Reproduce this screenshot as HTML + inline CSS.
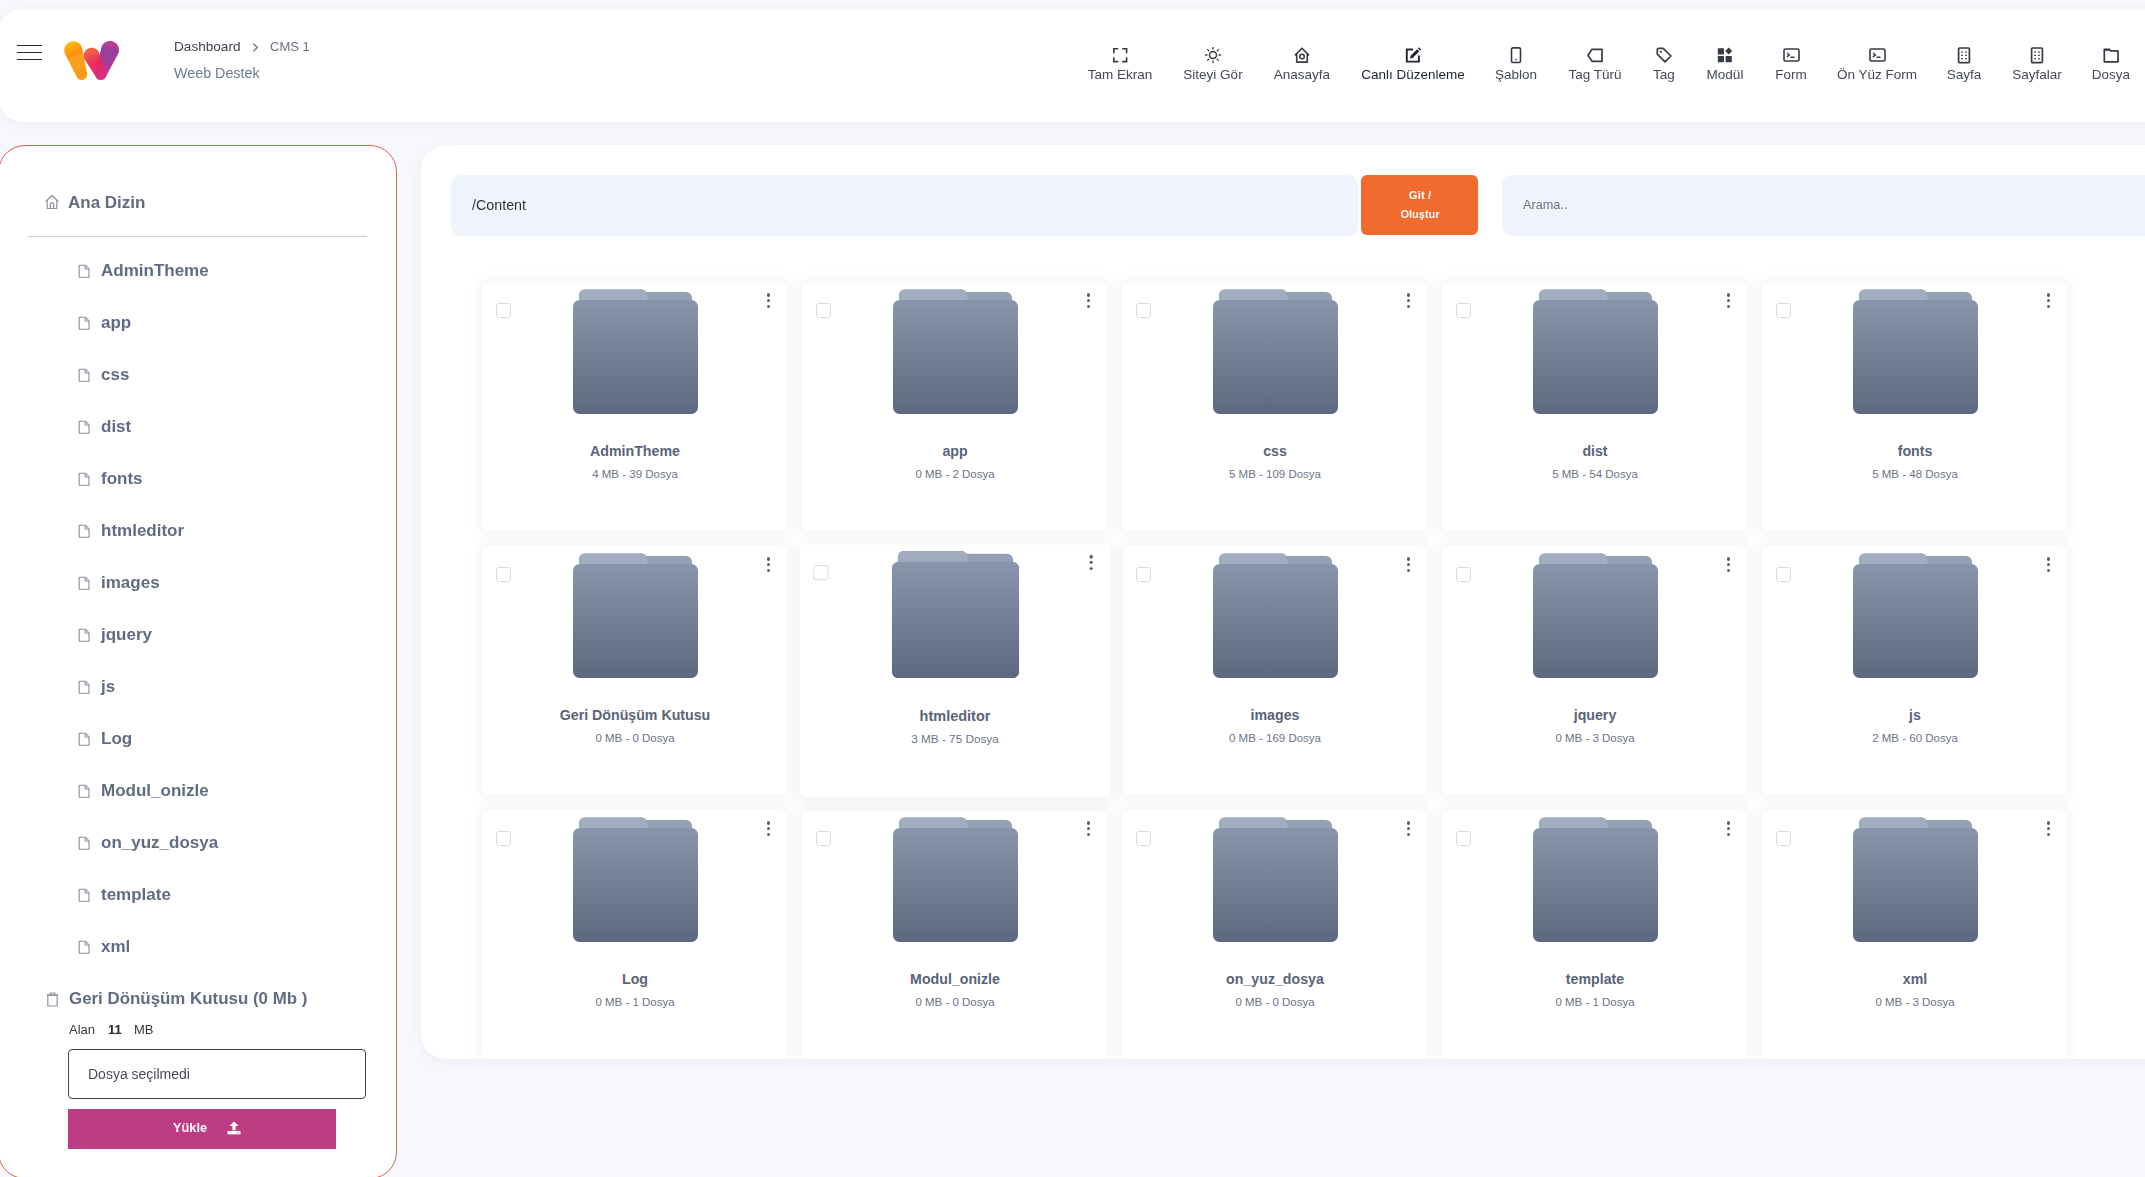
<!DOCTYPE html><html><head><meta charset="utf-8"><style>
*{box-sizing:border-box;margin:0;padding:0}
html,body{width:2145px;height:1177px;overflow:hidden;background:#f7f8fd;font-family:"Liberation Sans", sans-serif}
body{position:relative}
.t{position:absolute;white-space:nowrap;line-height:1;will-change:transform}
.c{width:300px;text-align:center}
.abs{position:absolute}
#hdr{position:absolute;left:-2px;top:9px;width:2300px;height:113px;background:#fff;border-radius:25px;box-shadow:0 2px 12px rgba(110,120,170,0.08)}
#side{position:absolute;left:-2px;top:145px;width:399px;height:1034px;background:#fff;border:1px solid #d6624a;border-radius:27px}
#main{position:absolute;left:421px;top:145px;width:1900px;height:914px;background:#fff;border-radius:25px;box-shadow:0 3px 14px rgba(110,120,170,0.08);overflow:hidden}
.inp{position:absolute;background:#eff3fc;border-radius:10px}
.card{position:absolute;width:304px;height:248px;background:#fff;border-radius:5px;box-shadow:0 0 14px 6px rgba(0,0,0,0.035)}
.card.hov{transform:scale(1.02);box-shadow:0 3px 12px 4px rgba(0,0,0,0.045);z-index:2}
.cb{position:absolute;left:13px;top:20px;width:15px;height:15px;border:1px solid #dcdcdc;border-radius:3px;background:#fff}
.dots{position:absolute;left:284px;top:10px;width:4px;height:16px}
.dots i{position:absolute;left:0;width:3.2px;height:3.2px;border-radius:50%;background:#5a5f6b}
.fold{position:absolute;left:90px;top:6px;width:125px;height:125px}
.nm{position:absolute;left:0;width:304px;text-align:center;white-space:nowrap;line-height:1}
</style></head><body>
<svg width="0" height="0" style="position:absolute"><defs>
<linearGradient id="fg" x1="0" y1="0" x2="0" y2="1"><stop offset="0" stop-color="#8995ac"/><stop offset="1" stop-color="#5d6981"/></linearGradient>
<symbol id="fold" viewBox="0 0 125 125">
<path d="M6 17V8.1A5 5 0 0 1 11 3.1H113A6 6 0 0 1 119 9.1V17Z" fill="#929fb5"/>
<path d="M6 17V5.8A5.6 5.6 0 0 1 11.6 0.2H69A3 3 0 0 1 71.2 1.1L74.3 3.6V17Z" fill="#a1adbf"/>
<rect x="0" y="11" width="125" height="114" rx="6.5" fill="url(#fg)"/>
</symbol></defs></svg>
<div id="hdr"></div><div class="abs" style="left:17px;top:44.75px;width:25px;height:1.5px;background:#2b2b2b"></div><div class="abs" style="left:17px;top:51.65px;width:25px;height:1.5px;background:#2b2b2b"></div><div class="abs" style="left:17px;top:58.65px;width:25px;height:1.5px;background:#2b2b2b"></div><svg class="abs" style="left:56px;top:34px" width="72" height="54" viewBox="56 34 72 54">
<defs>
<linearGradient id="lgA" gradientUnits="userSpaceOnUse" x1="66" y1="42" x2="84" y2="80"><stop offset="0" stop-color="#ffc107"/><stop offset="0.35" stop-color="#fb8f0a"/><stop offset="0.45" stop-color="#f9a11b"/><stop offset="1" stop-color="#f7991d"/></linearGradient>
<linearGradient id="lgB" gradientUnits="userSpaceOnUse" x1="86" y1="48" x2="102" y2="80"><stop offset="0" stop-color="#f4683a"/><stop offset="0.5" stop-color="#e8235a"/><stop offset="1" stop-color="#d9307c"/></linearGradient>
<linearGradient id="lgC" gradientUnits="userSpaceOnUse" x1="112" y1="42" x2="100" y2="80"><stop offset="0" stop-color="#c13b8f"/><stop offset="0.2" stop-color="#9a3f9e"/><stop offset="0.5" stop-color="#a23d9a"/><stop offset="1" stop-color="#d5368a"/></linearGradient>
</defs>
<path d="M64.30 50.20 L64.38 49.03 L64.61 47.87 L64.99 46.76 L65.51 45.70 L66.16 44.72 L66.94 43.84 L67.82 43.06 L68.80 42.41 L69.86 41.89 L70.97 41.51 L72.13 41.28 L73.30 41.20 L74.47 41.28 L75.63 41.51 L76.74 41.89 L77.80 42.41 L78.78 43.06 L79.66 43.84 L80.44 44.72 L81.09 45.70 L81.61 46.76 L81.99 47.87 L87.01 72.85 L87.15 73.57 L87.20 74.30 L87.15 75.03 L87.01 75.75 L86.77 76.44 L86.45 77.10 L86.04 77.71 L85.56 78.26 L85.01 78.74 L84.40 79.15 L83.74 79.47 L83.05 79.71 L82.33 79.85 L81.60 79.90 L80.87 79.85 L80.15 79.71 L79.46 79.47 L78.80 79.15 L78.19 78.74 L77.64 78.26 L77.16 77.71 L76.75 77.10 L65.51 54.70 L64.99 53.64 L64.61 52.53 L64.38 51.37Z" fill="url(#lgA)"/>
<path d="M95.20 74.30 L95.25 73.57 L95.39 72.85 L101.31 47.67 L101.69 46.56 L102.21 45.50 L102.86 44.52 L103.64 43.64 L104.52 42.86 L105.50 42.21 L106.56 41.69 L107.67 41.31 L108.83 41.08 L110.00 41.00 L111.17 41.08 L112.33 41.31 L113.44 41.69 L114.50 42.21 L115.48 42.86 L116.36 43.64 L117.14 44.52 L117.79 45.50 L118.31 46.56 L118.69 47.67 L118.92 48.83 L119.00 50.00 L118.92 51.17 L118.69 52.33 L118.31 53.44 L117.79 54.50 L105.65 77.10 L105.24 77.71 L104.76 78.26 L104.21 78.74 L103.60 79.15 L102.94 79.47 L102.25 79.71 L101.53 79.85 L100.80 79.90 L100.07 79.85 L99.35 79.71 L98.66 79.47 L98.00 79.15 L97.39 78.74 L96.84 78.26 L96.36 77.71 L95.95 77.10 L95.63 76.44 L95.39 75.75 L95.25 75.03Z" fill="url(#lgC)"/>
<path d="M83.70 55.60 L83.77 54.57 L83.97 53.56 L84.30 52.58 L84.76 51.65 L85.33 50.79 L86.01 50.01 L86.79 49.33 L87.65 48.76 L88.58 48.30 L89.56 47.97 L90.57 47.77 L91.60 47.70 L92.63 47.77 L93.64 47.97 L94.62 48.30 L95.55 48.76 L96.41 49.33 L97.19 50.01 L97.87 50.79 L98.44 51.65 L98.90 52.58 L105.97 72.16 L106.21 72.85 L106.35 73.57 L106.40 74.30 L106.35 75.03 L106.21 75.75 L105.97 76.44 L105.65 77.10 L105.24 77.71 L104.76 78.26 L104.21 78.74 L103.60 79.15 L102.94 79.47 L102.25 79.71 L101.53 79.85 L100.80 79.90 L100.07 79.85 L99.35 79.71 L98.66 79.47 L98.00 79.15 L97.39 78.74 L96.84 78.26 L96.36 77.71 L95.95 77.10 L84.76 59.55 L84.30 58.62 L83.97 57.64 L83.77 56.63Z" fill="url(#lgB)" opacity="0.96"/>
</svg><div class="t" style="left:173.7px;top:39.79px;font-size:13.6px;font-weight:normal;color:#3d4350;">Dashboard</div><svg class="abs" style="left:251px;top:42px" width="9" height="11" viewBox="0 0 9 11"><polyline points="2.5,1.8 6.3,5.5 2.5,9.2" fill="none" stroke="#6b7a99" stroke-width="1.4"/></svg><div class="t" style="left:270.0px;top:40.30px;font-size:13.0px;font-weight:normal;color:#6b7280;">CMS 1</div><div class="t" style="left:173.7px;top:66.00px;font-size:14.3px;font-weight:normal;color:#6b7a90;">Weeb Destek</div><svg class="abs" style="left:1112.2px;top:47px" width="17" height="17" viewBox="0 0 17 17"><path d="M1.8 6.2V1.8H6.2M10.2 1.8H14.6V6.2M14.6 10.2V14.6H10.2M6.2 14.6H1.8V10.2" fill="none" stroke="#363b47" stroke-width="1.6"/></svg><div class="t c" style="left:970.2px;top:67.77px;font-size:13.5px;font-weight:normal;color:#434955;">Tam Ekran</div><svg class="abs" style="left:1204.6px;top:47px" width="17" height="17" viewBox="0 0 17 17"><circle cx="8" cy="8" r="3.5" fill="none" stroke="#363b47" stroke-width="1.5"/><line x1="14.00" y1="8.00" x2="15.60" y2="8.00" stroke="#363b47" stroke-width="1.3" stroke-linecap="round"/><line x1="12.24" y1="12.24" x2="13.37" y2="13.37" stroke="#363b47" stroke-width="1.3" stroke-linecap="round"/><line x1="8.00" y1="14.00" x2="8.00" y2="15.60" stroke="#363b47" stroke-width="1.3" stroke-linecap="round"/><line x1="3.76" y1="12.24" x2="2.63" y2="13.37" stroke="#363b47" stroke-width="1.3" stroke-linecap="round"/><line x1="2.00" y1="8.00" x2="0.40" y2="8.00" stroke="#363b47" stroke-width="1.3" stroke-linecap="round"/><line x1="3.76" y1="3.76" x2="2.63" y2="2.63" stroke="#363b47" stroke-width="1.3" stroke-linecap="round"/><line x1="8.00" y1="2.00" x2="8.00" y2="0.40" stroke="#363b47" stroke-width="1.3" stroke-linecap="round"/><line x1="12.24" y1="3.76" x2="13.37" y2="2.63" stroke="#363b47" stroke-width="1.3" stroke-linecap="round"/></svg><div class="t c" style="left:1062.6px;top:67.77px;font-size:13.5px;font-weight:normal;color:#434955;">Siteyi Gör</div><svg class="abs" style="left:1293.8px;top:47px" width="17" height="17" viewBox="0 0 17 17"><path d="M0.9 8.4L8 1.2L15.1 8.4M2.7 6.8V15.1H13.3V6.8" fill="none" stroke="#363b47" stroke-width="1.6" stroke-linejoin="round"/><circle cx="8" cy="9.5" r="2.3" fill="none" stroke="#363b47" stroke-width="1.5"/></svg><div class="t c" style="left:1151.8px;top:67.77px;font-size:13.5px;font-weight:normal;color:#434955;">Anasayfa</div><svg class="abs" style="left:1404.8px;top:47px" width="17" height="17" viewBox="0 0 17 17"><path d="M8 2.5H1.8V14.6H13.9V8.4" fill="none" stroke="#1f2430" stroke-width="1.9"/><path d="M5 11.5L5.6 8.8L12.2 2.2L14.3 4.3L7.7 10.9Z" fill="#1f2430"/><path d="M13 1.4L14.1 0.3L16.2 2.4L15.1 3.5Z" fill="#1f2430"/></svg><div class="t c" style="left:1262.8px;top:67.77px;font-size:13.5px;font-weight:normal;color:#1d2430;">Canlı Düzenleme</div><svg class="abs" style="left:1508.3px;top:47px" width="17" height="17" viewBox="0 0 17 17"><rect x="3.5" y="0.9" width="9" height="14.6" rx="1.4" fill="none" stroke="#363b47" stroke-width="1.6"/><circle cx="8" cy="12.6" r="0.8" fill="#363b47"/></svg><div class="t c" style="left:1366.3px;top:67.77px;font-size:13.5px;font-weight:normal;color:#434955;">Şablon</div><svg class="abs" style="left:1586.8px;top:47px" width="17" height="17" viewBox="0 0 17 17"><path d="M5 2.3H15V14.3H5L1 8.3Z" fill="none" stroke="#363b47" stroke-width="1.7" stroke-linejoin="round"/></svg><div class="t c" style="left:1444.8px;top:67.77px;font-size:13.5px;font-weight:normal;color:#434955;">Tag Türü</div><svg class="abs" style="left:1655.6px;top:47px" width="17" height="17" viewBox="0 0 17 17"><path d="M1.3 2.2V7.2L9 14.9L14.9 9L7.2 1.3H2.2Z" fill="none" stroke="#363b47" stroke-width="1.7" stroke-linejoin="round" transform="rotate(0)"/><circle cx="4.8" cy="4.8" r="1.1" fill="#363b47"/></svg><div class="t c" style="left:1513.6px;top:67.77px;font-size:13.5px;font-weight:normal;color:#434955;">Tag</div><svg class="abs" style="left:1716.7px;top:47px" width="17" height="17" viewBox="0 0 17 17"><rect x="0.8" y="1.3" width="6.2" height="6.2" rx="0.6" fill="#363b47"/><rect x="0.8" y="9" width="6.2" height="6.2" rx="0.6" fill="#363b47"/><rect x="8.6" y="9" width="6.2" height="6.2" rx="0.6" fill="#363b47"/><path d="M11.7 0.6L15.2 4.1L11.7 7.6L8.2 4.1Z" fill="#363b47"/></svg><div class="t c" style="left:1574.7px;top:67.77px;font-size:13.5px;font-weight:normal;color:#434955;">Modül</div><svg class="abs" style="left:1782.6px;top:47px" width="17" height="17" viewBox="0 0 17 17"><rect x="1" y="2" width="15" height="12" rx="1.4" fill="none" stroke="#363b47" stroke-width="1.6"/><path d="M4 6L6.3 7.9L4 9.8" fill="none" stroke="#363b47" stroke-width="1.5"/><line x1="7.5" y1="10.3" x2="11.5" y2="10.3" stroke="#363b47" stroke-width="1.5"/></svg><div class="t c" style="left:1640.6px;top:67.77px;font-size:13.5px;font-weight:normal;color:#434955;">Form</div><svg class="abs" style="left:1868.6px;top:47px" width="17" height="17" viewBox="0 0 17 17"><rect x="1" y="2" width="15" height="12" rx="1.4" fill="none" stroke="#363b47" stroke-width="1.6"/><path d="M4 6L6.3 7.9L4 9.8" fill="none" stroke="#363b47" stroke-width="1.5"/><line x1="7.5" y1="10.3" x2="11.5" y2="10.3" stroke="#363b47" stroke-width="1.5"/></svg><div class="t c" style="left:1726.6px;top:67.77px;font-size:13.5px;font-weight:normal;color:#434955;">Ön Yüz Form</div><svg class="abs" style="left:1955.8px;top:47px" width="17" height="17" viewBox="0 0 17 17"><rect x="2.6" y="1" width="10.8" height="14.6" rx="1" fill="none" stroke="#363b47" stroke-width="1.7"/><g fill="#363b47"><rect x="5.2" y="4.4" width="1.7" height="1.3"/><rect x="9.1" y="4.4" width="1.7" height="1.3"/><rect x="5.2" y="7.7" width="1.7" height="1.3"/><rect x="9.1" y="7.7" width="1.7" height="1.3"/><rect x="5.2" y="11" width="1.7" height="1.3"/><rect x="9.1" y="11" width="1.7" height="1.3"/></g></svg><div class="t c" style="left:1813.8px;top:67.77px;font-size:13.5px;font-weight:normal;color:#434955;">Sayfa</div><svg class="abs" style="left:2028.6px;top:47px" width="17" height="17" viewBox="0 0 17 17"><rect x="2.6" y="1" width="10.8" height="14.6" rx="1" fill="none" stroke="#363b47" stroke-width="1.7"/><g fill="#363b47"><rect x="5.2" y="4.4" width="1.7" height="1.3"/><rect x="9.1" y="4.4" width="1.7" height="1.3"/><rect x="5.2" y="7.7" width="1.7" height="1.3"/><rect x="9.1" y="7.7" width="1.7" height="1.3"/><rect x="5.2" y="11" width="1.7" height="1.3"/><rect x="9.1" y="11" width="1.7" height="1.3"/></g></svg><div class="t c" style="left:1886.6px;top:67.77px;font-size:13.5px;font-weight:normal;color:#434955;">Sayfalar</div><svg class="abs" style="left:2103.3px;top:47px" width="17" height="17" viewBox="0 0 17 17"><path d="M1.3 2.4H6.3L7.8 3.9H15V14.8H1.3Z" fill="none" stroke="#363b47" stroke-width="1.7" stroke-linejoin="round"/><rect x="1.3" y="2.2" width="5" height="1.6" fill="#363b47"/></svg><div class="t c" style="left:1961.3px;top:67.77px;font-size:13.5px;font-weight:normal;color:#434955;">Dosya</div><div id="side"></div><svg class="abs" style="left:44px;top:194px" width="16" height="16" viewBox="0 0 16 16"><path d="M1.8 7.2L8 1.5L14.2 7.2M3.2 6V14.5H12.8V6" fill="none" stroke="#8b93a3" stroke-width="1.2" stroke-linejoin="round"/><path d="M6.4 14.5V10.2A1.6 1.6 0 0 1 9.6 10.2V14.5" fill="none" stroke="#8b93a3" stroke-width="1.2"/></svg><div class="t" style="left:68.3px;top:193.51px;font-size:17px;font-weight:bold;color:#616c83;">Ana Dizin</div><div class="abs" style="left:28px;top:236px;width:339px;height:1px;background:#c6c9cf"></div><svg class="abs" style="left:77.5px;top:263.6px" width="12.5" height="14.5" viewBox="0 0 12.5 14.5"><path d="M1.2 1.2H7.4L11 4.8V13.2H1.2Z" fill="none" stroke="#8b93a3" stroke-width="1.15" stroke-linejoin="round"/><path d="M7.2 1.2V5H11" fill="none" stroke="#8b93a3" stroke-width="1.1"/></svg><div class="t" style="left:100.6px;top:262.31px;font-size:17px;font-weight:bold;color:#616c83;">AdminTheme</div><svg class="abs" style="left:77.5px;top:315.6px" width="12.5" height="14.5" viewBox="0 0 12.5 14.5"><path d="M1.2 1.2H7.4L11 4.8V13.2H1.2Z" fill="none" stroke="#8b93a3" stroke-width="1.15" stroke-linejoin="round"/><path d="M7.2 1.2V5H11" fill="none" stroke="#8b93a3" stroke-width="1.1"/></svg><div class="t" style="left:100.6px;top:314.31px;font-size:17px;font-weight:bold;color:#616c83;">app</div><svg class="abs" style="left:77.5px;top:367.6px" width="12.5" height="14.5" viewBox="0 0 12.5 14.5"><path d="M1.2 1.2H7.4L11 4.8V13.2H1.2Z" fill="none" stroke="#8b93a3" stroke-width="1.15" stroke-linejoin="round"/><path d="M7.2 1.2V5H11" fill="none" stroke="#8b93a3" stroke-width="1.1"/></svg><div class="t" style="left:100.6px;top:366.31px;font-size:17px;font-weight:bold;color:#616c83;">css</div><svg class="abs" style="left:77.5px;top:419.6px" width="12.5" height="14.5" viewBox="0 0 12.5 14.5"><path d="M1.2 1.2H7.4L11 4.8V13.2H1.2Z" fill="none" stroke="#8b93a3" stroke-width="1.15" stroke-linejoin="round"/><path d="M7.2 1.2V5H11" fill="none" stroke="#8b93a3" stroke-width="1.1"/></svg><div class="t" style="left:100.6px;top:418.31px;font-size:17px;font-weight:bold;color:#616c83;">dist</div><svg class="abs" style="left:77.5px;top:471.6px" width="12.5" height="14.5" viewBox="0 0 12.5 14.5"><path d="M1.2 1.2H7.4L11 4.8V13.2H1.2Z" fill="none" stroke="#8b93a3" stroke-width="1.15" stroke-linejoin="round"/><path d="M7.2 1.2V5H11" fill="none" stroke="#8b93a3" stroke-width="1.1"/></svg><div class="t" style="left:100.6px;top:470.31px;font-size:17px;font-weight:bold;color:#616c83;">fonts</div><svg class="abs" style="left:77.5px;top:523.6px" width="12.5" height="14.5" viewBox="0 0 12.5 14.5"><path d="M1.2 1.2H7.4L11 4.8V13.2H1.2Z" fill="none" stroke="#8b93a3" stroke-width="1.15" stroke-linejoin="round"/><path d="M7.2 1.2V5H11" fill="none" stroke="#8b93a3" stroke-width="1.1"/></svg><div class="t" style="left:100.6px;top:522.31px;font-size:17px;font-weight:bold;color:#616c83;">htmleditor</div><svg class="abs" style="left:77.5px;top:575.6px" width="12.5" height="14.5" viewBox="0 0 12.5 14.5"><path d="M1.2 1.2H7.4L11 4.8V13.2H1.2Z" fill="none" stroke="#8b93a3" stroke-width="1.15" stroke-linejoin="round"/><path d="M7.2 1.2V5H11" fill="none" stroke="#8b93a3" stroke-width="1.1"/></svg><div class="t" style="left:100.6px;top:574.31px;font-size:17px;font-weight:bold;color:#616c83;">images</div><svg class="abs" style="left:77.5px;top:627.6px" width="12.5" height="14.5" viewBox="0 0 12.5 14.5"><path d="M1.2 1.2H7.4L11 4.8V13.2H1.2Z" fill="none" stroke="#8b93a3" stroke-width="1.15" stroke-linejoin="round"/><path d="M7.2 1.2V5H11" fill="none" stroke="#8b93a3" stroke-width="1.1"/></svg><div class="t" style="left:100.6px;top:626.31px;font-size:17px;font-weight:bold;color:#616c83;">jquery</div><svg class="abs" style="left:77.5px;top:679.6px" width="12.5" height="14.5" viewBox="0 0 12.5 14.5"><path d="M1.2 1.2H7.4L11 4.8V13.2H1.2Z" fill="none" stroke="#8b93a3" stroke-width="1.15" stroke-linejoin="round"/><path d="M7.2 1.2V5H11" fill="none" stroke="#8b93a3" stroke-width="1.1"/></svg><div class="t" style="left:100.6px;top:678.31px;font-size:17px;font-weight:bold;color:#616c83;">js</div><svg class="abs" style="left:77.5px;top:731.6px" width="12.5" height="14.5" viewBox="0 0 12.5 14.5"><path d="M1.2 1.2H7.4L11 4.8V13.2H1.2Z" fill="none" stroke="#8b93a3" stroke-width="1.15" stroke-linejoin="round"/><path d="M7.2 1.2V5H11" fill="none" stroke="#8b93a3" stroke-width="1.1"/></svg><div class="t" style="left:100.6px;top:730.31px;font-size:17px;font-weight:bold;color:#616c83;">Log</div><svg class="abs" style="left:77.5px;top:783.6px" width="12.5" height="14.5" viewBox="0 0 12.5 14.5"><path d="M1.2 1.2H7.4L11 4.8V13.2H1.2Z" fill="none" stroke="#8b93a3" stroke-width="1.15" stroke-linejoin="round"/><path d="M7.2 1.2V5H11" fill="none" stroke="#8b93a3" stroke-width="1.1"/></svg><div class="t" style="left:100.6px;top:782.31px;font-size:17px;font-weight:bold;color:#616c83;">Modul_onizle</div><svg class="abs" style="left:77.5px;top:835.6px" width="12.5" height="14.5" viewBox="0 0 12.5 14.5"><path d="M1.2 1.2H7.4L11 4.8V13.2H1.2Z" fill="none" stroke="#8b93a3" stroke-width="1.15" stroke-linejoin="round"/><path d="M7.2 1.2V5H11" fill="none" stroke="#8b93a3" stroke-width="1.1"/></svg><div class="t" style="left:100.6px;top:834.31px;font-size:17px;font-weight:bold;color:#616c83;">on_yuz_dosya</div><svg class="abs" style="left:77.5px;top:887.6px" width="12.5" height="14.5" viewBox="0 0 12.5 14.5"><path d="M1.2 1.2H7.4L11 4.8V13.2H1.2Z" fill="none" stroke="#8b93a3" stroke-width="1.15" stroke-linejoin="round"/><path d="M7.2 1.2V5H11" fill="none" stroke="#8b93a3" stroke-width="1.1"/></svg><div class="t" style="left:100.6px;top:886.31px;font-size:17px;font-weight:bold;color:#616c83;">template</div><svg class="abs" style="left:77.5px;top:939.6px" width="12.5" height="14.5" viewBox="0 0 12.5 14.5"><path d="M1.2 1.2H7.4L11 4.8V13.2H1.2Z" fill="none" stroke="#8b93a3" stroke-width="1.15" stroke-linejoin="round"/><path d="M7.2 1.2V5H11" fill="none" stroke="#8b93a3" stroke-width="1.1"/></svg><div class="t" style="left:100.6px;top:938.31px;font-size:17px;font-weight:bold;color:#616c83;">xml</div><svg class="abs" style="left:45.5px;top:991.5px" width="13" height="15" viewBox="0 0 13 15"><path d="M1.8 3.2H11.2V14H1.8Z" fill="none" stroke="#8b93a3" stroke-width="1.2"/><path d="M0.8 3.2H12.2M4.2 3.2V1H8.8V3.2" fill="none" stroke="#8b93a3" stroke-width="1.2"/></svg><div class="t" style="left:68.5px;top:990.89px;font-size:16.9px;font-weight:bold;color:#616c83;">Geri Dönüşüm Kutusu (0 Mb )</div><div class="t" style="left:68.5px;top:1022.80px;font-size:13px;font-weight:normal;color:#3a3a3a;">Alan</div><div class="t" style="left:107.6px;top:1022.80px;font-size:13px;font-weight:bold;color:#2a2a2a;">11</div><div class="t" style="left:133.5px;top:1022.80px;font-size:13px;font-weight:normal;color:#3a3a3a;">MB</div><div class="abs" style="left:68px;top:1049px;width:298px;height:50px;border:1.3px solid #3e4257;border-radius:4px;background:#fff"></div><div class="t" style="left:87.6px;top:1067.25px;font-size:14px;font-weight:normal;color:#474c57;">Dosya seçilmedi</div><div class="abs" style="left:68px;top:1109px;width:268px;height:40px;background:#bd3d85"></div><div class="t" style="left:173.4px;top:1121.96px;font-size:12.8px;font-weight:bold;color:#fff;">Yükle</div><svg class="abs" style="left:226.5px;top:1121px" width="14" height="14" viewBox="0 0 14 14"><path d="M7 0.5L11.5 5H8.6V9.2H5.4V5H2.5Z" fill="#fff"/><rect x="0.5" y="10" width="13" height="3.4" fill="#fff"/><rect x="9.5" y="11.4" width="1" height="0.9" fill="#bd3d85"/><rect x="11.3" y="11.4" width="1" height="0.9" fill="#bd3d85"/></svg><div id="main"><div class="card" style="left:62px;top:138px"><div class="cb"></div><div class="dots"><i style="top:0.4px"></i><i style="top:6.3px"></i><i style="top:12.1px"></i></div><svg class="fold"><use href="#fold"/></svg><div class="nm" style="top:160.78px;font-size:14.2px;font-weight:bold;color:#5a6479">AdminTheme</div><div class="nm" style="top:186.07px;font-size:11.5px;color:#6c7588">4 MB - 39 Dosya</div></div><div class="card" style="left:382px;top:138px"><div class="cb"></div><div class="dots"><i style="top:0.4px"></i><i style="top:6.3px"></i><i style="top:12.1px"></i></div><svg class="fold"><use href="#fold"/></svg><div class="nm" style="top:160.78px;font-size:14.2px;font-weight:bold;color:#5a6479">app</div><div class="nm" style="top:186.07px;font-size:11.5px;color:#6c7588">0 MB - 2 Dosya</div></div><div class="card" style="left:702px;top:138px"><div class="cb"></div><div class="dots"><i style="top:0.4px"></i><i style="top:6.3px"></i><i style="top:12.1px"></i></div><svg class="fold"><use href="#fold"/></svg><div class="nm" style="top:160.78px;font-size:14.2px;font-weight:bold;color:#5a6479">css</div><div class="nm" style="top:186.07px;font-size:11.5px;color:#6c7588">5 MB - 109 Dosya</div></div><div class="card" style="left:1022px;top:138px"><div class="cb"></div><div class="dots"><i style="top:0.4px"></i><i style="top:6.3px"></i><i style="top:12.1px"></i></div><svg class="fold"><use href="#fold"/></svg><div class="nm" style="top:160.78px;font-size:14.2px;font-weight:bold;color:#5a6479">dist</div><div class="nm" style="top:186.07px;font-size:11.5px;color:#6c7588">5 MB - 54 Dosya</div></div><div class="card" style="left:1342px;top:138px"><div class="cb"></div><div class="dots"><i style="top:0.4px"></i><i style="top:6.3px"></i><i style="top:12.1px"></i></div><svg class="fold"><use href="#fold"/></svg><div class="nm" style="top:160.78px;font-size:14.2px;font-weight:bold;color:#5a6479">fonts</div><div class="nm" style="top:186.07px;font-size:11.5px;color:#6c7588">5 MB - 48 Dosya</div></div><div class="card" style="left:62px;top:402px"><div class="cb"></div><div class="dots"><i style="top:0.4px"></i><i style="top:6.3px"></i><i style="top:12.1px"></i></div><svg class="fold"><use href="#fold"/></svg><div class="nm" style="top:160.78px;font-size:14.2px;font-weight:bold;color:#5a6479">Geri Dönüşüm Kutusu</div><div class="nm" style="top:186.07px;font-size:11.5px;color:#6c7588">0 MB - 0 Dosya</div></div><div class="card hov" style="left:382px;top:402px"><div class="cb"></div><div class="dots"><i style="top:0.4px"></i><i style="top:6.3px"></i><i style="top:12.1px"></i></div><svg class="fold"><use href="#fold"/></svg><div class="nm" style="top:160.78px;font-size:14.2px;font-weight:bold;color:#5a6479">htmleditor</div><div class="nm" style="top:186.07px;font-size:11.5px;color:#6c7588">3 MB - 75 Dosya</div></div><div class="card" style="left:702px;top:402px"><div class="cb"></div><div class="dots"><i style="top:0.4px"></i><i style="top:6.3px"></i><i style="top:12.1px"></i></div><svg class="fold"><use href="#fold"/></svg><div class="nm" style="top:160.78px;font-size:14.2px;font-weight:bold;color:#5a6479">images</div><div class="nm" style="top:186.07px;font-size:11.5px;color:#6c7588">0 MB - 169 Dosya</div></div><div class="card" style="left:1022px;top:402px"><div class="cb"></div><div class="dots"><i style="top:0.4px"></i><i style="top:6.3px"></i><i style="top:12.1px"></i></div><svg class="fold"><use href="#fold"/></svg><div class="nm" style="top:160.78px;font-size:14.2px;font-weight:bold;color:#5a6479">jquery</div><div class="nm" style="top:186.07px;font-size:11.5px;color:#6c7588">0 MB - 3 Dosya</div></div><div class="card" style="left:1342px;top:402px"><div class="cb"></div><div class="dots"><i style="top:0.4px"></i><i style="top:6.3px"></i><i style="top:12.1px"></i></div><svg class="fold"><use href="#fold"/></svg><div class="nm" style="top:160.78px;font-size:14.2px;font-weight:bold;color:#5a6479">js</div><div class="nm" style="top:186.07px;font-size:11.5px;color:#6c7588">2 MB - 60 Dosya</div></div><div class="card" style="left:62px;top:666px"><div class="cb"></div><div class="dots"><i style="top:0.4px"></i><i style="top:6.3px"></i><i style="top:12.1px"></i></div><svg class="fold"><use href="#fold"/></svg><div class="nm" style="top:160.78px;font-size:14.2px;font-weight:bold;color:#5a6479">Log</div><div class="nm" style="top:186.07px;font-size:11.5px;color:#6c7588">0 MB - 1 Dosya</div></div><div class="card" style="left:382px;top:666px"><div class="cb"></div><div class="dots"><i style="top:0.4px"></i><i style="top:6.3px"></i><i style="top:12.1px"></i></div><svg class="fold"><use href="#fold"/></svg><div class="nm" style="top:160.78px;font-size:14.2px;font-weight:bold;color:#5a6479">Modul_onizle</div><div class="nm" style="top:186.07px;font-size:11.5px;color:#6c7588">0 MB - 0 Dosya</div></div><div class="card" style="left:702px;top:666px"><div class="cb"></div><div class="dots"><i style="top:0.4px"></i><i style="top:6.3px"></i><i style="top:12.1px"></i></div><svg class="fold"><use href="#fold"/></svg><div class="nm" style="top:160.78px;font-size:14.2px;font-weight:bold;color:#5a6479">on_yuz_dosya</div><div class="nm" style="top:186.07px;font-size:11.5px;color:#6c7588">0 MB - 0 Dosya</div></div><div class="card" style="left:1022px;top:666px"><div class="cb"></div><div class="dots"><i style="top:0.4px"></i><i style="top:6.3px"></i><i style="top:12.1px"></i></div><svg class="fold"><use href="#fold"/></svg><div class="nm" style="top:160.78px;font-size:14.2px;font-weight:bold;color:#5a6479">template</div><div class="nm" style="top:186.07px;font-size:11.5px;color:#6c7588">0 MB - 1 Dosya</div></div><div class="card" style="left:1342px;top:666px"><div class="cb"></div><div class="dots"><i style="top:0.4px"></i><i style="top:6.3px"></i><i style="top:12.1px"></i></div><svg class="fold"><use href="#fold"/></svg><div class="nm" style="top:160.78px;font-size:14.2px;font-weight:bold;color:#5a6479">xml</div><div class="nm" style="top:186.07px;font-size:11.5px;color:#6c7588">0 MB - 3 Dosya</div></div></div><div class="inp" style="left:451px;top:175px;width:907px;height:61px"></div><div class="t" style="left:471.9px;top:198.00px;font-size:14.3px;font-weight:normal;color:#2f3440;">/Content</div><div class="abs" style="left:1361px;top:175px;width:117px;height:60px;background:#f26b2e;border-radius:6px"></div><div class="t c" style="left:1269.5px;top:190.07px;font-size:11.5px;font-weight:bold;color:#fff;">Git /</div><div class="t c" style="left:1269.5px;top:208.59px;font-size:11.0px;font-weight:bold;color:#fff;">Oluştur</div><div class="inp" style="left:1502px;top:175px;width:800px;height:61px"></div><div class="t" style="left:1522.8px;top:199.25px;font-size:12.7px;font-weight:normal;color:#6b7385;">Arama..</div>
</body></html>
